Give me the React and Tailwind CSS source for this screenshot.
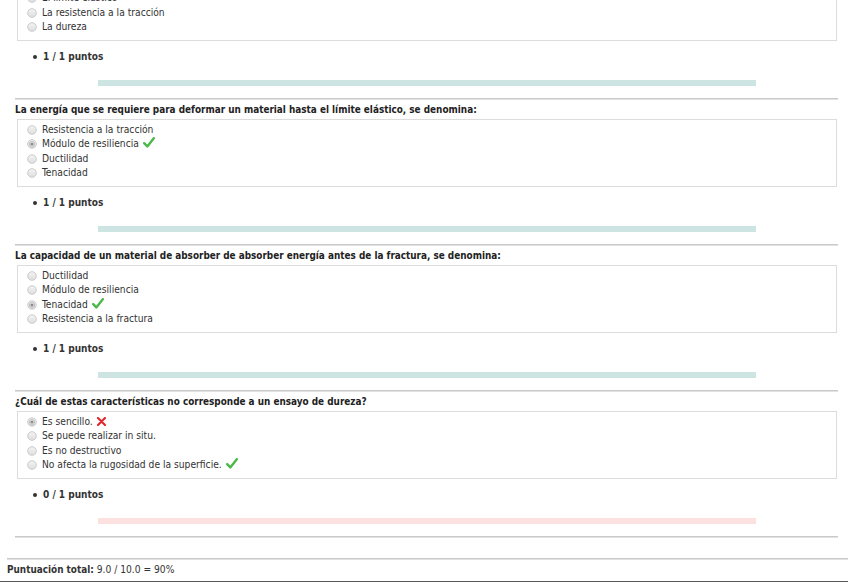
import React from 'react';

const questions = [
  {
    text: 'La energía que se requiere para deformar un material hasta el límite elástico, se denomina:',
    options: [
      { label: 'Resistencia a la tracción' },
      { label: 'Módulo de resiliencia', selected: true, mark: 'ok' },
      { label: 'Ductilidad' },
      { label: 'Tenacidad' },
    ],
    score: '1 / 1 puntos',
    ok: true,
  },
  {
    text: 'La capacidad de un material de absorber de absorber energía antes de la fractura, se denomina:',
    options: [
      { label: 'Ductilidad' },
      { label: 'Módulo de resiliencia' },
      { label: 'Tenacidad', selected: true, mark: 'ok' },
      { label: 'Resistencia a la fractura' },
    ],
    score: '1 / 1 puntos',
    ok: true,
  },
  {
    text: '¿Cuál de estas características no corresponde a un ensayo de dureza?',
    options: [
      { label: 'Es sencillo.', selected: true, mark: 'bad' },
      { label: 'Se puede realizar in situ.' },
      { label: 'Es no destructivo' },
      { label: 'No afecta la rugosidad de la superficie.', mark: 'ok' },
    ],
    score: '0 / 1 puntos',
    ok: false,
  },
];

const Radio = ({ selected }) => (
  <svg width="10" height="10" viewBox="0 0 10 10" className="shrink-0">
    <defs>
      <linearGradient id="rg" x1="0" y1="0" x2="0" y2="1">
        <stop offset="0" stopColor="#f4f4f4" />
        <stop offset="1" stopColor="#dedede" />
      </linearGradient>
    </defs>
    <circle cx="5" cy="5" r="4.3" fill="url(#rg)" stroke="#c6c6c6" strokeWidth="0.9" />
    {selected && (
      <>
        <circle cx="5" cy="5" r="2.6" fill="#fafafa" stroke="#9a9a9a" strokeWidth="0.6" />
        <circle cx="5" cy="5" r="1.6" fill="#8a8a8a" />
      </>
    )}
  </svg>
);

const Check = () => (
  <svg width="12" height="11" viewBox="0 0 12 11" className="ml-[4px] -mt-[3px]">
    <path d="M1.2 6.2 L4.3 9.4 L10.8 1.2" fill="none" stroke="#4cb848" strokeWidth="2.4" strokeLinecap="round" strokeLinejoin="round" />
  </svg>
);

const Cross = () => (
  <svg width="9" height="9" viewBox="0 0 9 9" className="ml-[4px]">
    <path d="M1 1 L8 8 M8 1 L1 8" fill="none" stroke="#e3262b" strokeWidth="2.1" strokeLinecap="round" />
  </svg>
);

const OptionBox = ({ options }) => (
  <div className="ml-[2px] w-[820px] border border-[#dcdcdc] pl-[9px] pt-[3px] pb-[5px]">
    {options.map((o, i) => (
      <div key={i} className="flex items-center h-[14.5px] leading-[14.5px] text-[10.2px] text-[#333]">
        <Radio selected={o.selected} />
        <span className="ml-[5px]">{o.label}</span>
        {o.mark === 'ok' && <Check />}
        {o.mark === 'bad' && <Cross />}
      </div>
    ))}
  </div>
);

const Score = ({ score, ok }) => (
  <>
    <div className="mt-[9px] flex items-center h-[14px] leading-[14px] text-[10px] font-bold text-[#333]">
      <span className="ml-[18px] w-[4px] h-[4px] rounded-full bg-[#333]" />
      <span className="ml-[6px]">{score}</span>
    </div>
    <div className={`mt-[16px] ml-[83px] w-[658px] h-[6px] ${ok ? 'bg-[#cce5e3]' : 'bg-[#fde1e1]'}`} />
  </>
);

const Hr = () => <div className="h-[2px] bg-[#c9c9c9] border-b border-[#e2e2e2]" />;

export default function App() {
  return (
    <div className="h-[582px] w-[848px] overflow-hidden bg-white text-[11px] [font-stretch:condensed] font-['DejaVu_Sans_Condensed','DejaVu_Sans',sans-serif]">
      <div className="ml-[15px] w-[823px]">
        <div className="-mt-[13px]">
          <OptionBox
            options={[
              { label: 'El límite elástico' },
              { label: 'La resistencia a la tracción' },
              { label: 'La dureza' },
            ]}
          />
        </div>
        <Score score="1 / 1 puntos" ok />
        {questions.map((q, i) => (
          <div key={i} className="mt-[12px]">
            <Hr />
            <div className="mt-[3px] h-[14px] leading-[14px] text-[9.9px] font-bold text-[#222]">{q.text}</div>
            <div className="mt-[2px]">
              <OptionBox options={q.options} />
            </div>
            <Score score={q.score} ok={q.ok} />
          </div>
        ))}
        <div className="mt-[12px]">
          <Hr />
        </div>
      </div>
      <div className="mt-[20px] ml-[7px]">
        <Hr />
      </div>
      <div className="mt-[3px] ml-[7px] h-[14px] leading-[14px] text-[10.2px] text-[#333]">
        <span className="font-bold text-[9.9px]">Puntuación total:</span> 9.0 / 10.0 = 90%
      </div>
      <div className="mt-[4px] h-[4px] bg-[#5a5a5a]" />
    </div>
  );
}
